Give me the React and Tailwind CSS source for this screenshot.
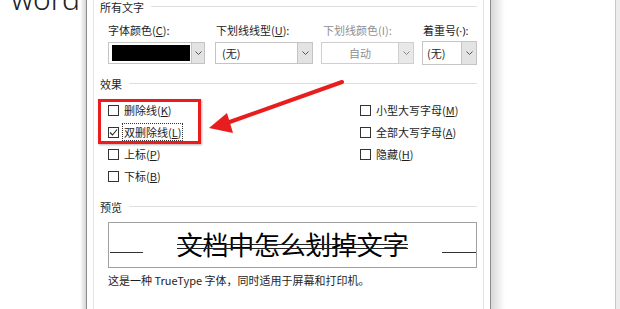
import React from "react";

const Chevron = ({ color = "#555" }) => (
    <svg width="7" height="4" viewBox="0 0 7 4" fill="none">
        <polyline points="0.5,0.5 3.5,3.5 6.5,0.5" stroke={color} strokeWidth="1" />
    </svg>
);

const GroupTitle = ({ children }) => (
    <div className="flex items-center h-[14px] leading-[14px]">
        <span className="text-[#1e1e1e] whitespace-nowrap">{children}</span>
        <div className="flex-1 h-px bg-[#dedede] ml-[7px] -mt-[2px]" />
    </div>
);

const Checkbox = ({ checked, label, keyChar, focus }) => (
    <div className="flex items-center h-[22px]">
        <div className="w-[11px] h-[11px] border border-[#333] bg-white flex items-center justify-center">
            {checked && (
                <svg width="9" height="9" viewBox="0 0 9 9" fill="none">
                    <polyline points="1,4.5 3.5,7 8,1.5" stroke="#222" strokeWidth="1.1" />
                </svg>
            )}
        </div>
        <span
            className={
                "ml-[3px] px-[1px] leading-[16px] text-[#1e1e1e] whitespace-nowrap " +
                (focus ? "border border-dotted border-[#333]" : "border border-transparent")
            }
        >
            {label}(<u>{keyChar}</u>)
        </span>
    </div>
);

export default function App() {
    return (
        <div className="relative w-[620px] h-[309px] overflow-hidden bg-white flex font-['Noto_Sans_CJK_SC',sans-serif] text-[11px]">
            {/* document behind the dialog */}
            <div className="relative w-[86px] shrink-0 overflow-hidden">
                <div className="w-[86px] overflow-hidden whitespace-nowrap pl-[11px] -mt-[16px] text-[30px] leading-[30px] text-[#222] font-['Noto_Sans','Noto_Sans_CJK_SC',sans-serif] font-light">
                    word 文
                </div>
                <div className="absolute right-0 top-0 bottom-0 w-[6px] bg-gradient-to-r from-transparent to-[#d4d4d4]" />
            </div>

            {/* dialog */}
            <div className="relative w-[405px] shrink-0 bg-white border-l border-r border-[#8c8c8c]">
                <div className="ml-[6px] mr-[6px] h-full border-l border-r border-[#e4e4e4] pl-[6px] pr-[6px]">
                    <GroupTitle>所有文字</GroupTitle>

                    <div className="ml-[8px] mt-[9px] flex">
                        <div className="w-[97px] flex flex-col">
                            <div className="h-[14px] leading-[14px] text-[#1e1e1e] whitespace-nowrap">字体颜色(<u>C</u>):</div>
                            <div className="mt-[5px] h-[22px] border border-[#c4c4c4] bg-white flex items-center pl-[3px]">
                                <div className="w-[78px] h-[16px] bg-black" />
                                <div className="ml-auto w-[13px] h-full bg-[#e3e3e3] border-l border-[#c4c4c4] flex items-center justify-center">
                                    <Chevron />
                                </div>
                            </div>
                        </div>
                        <div className="w-[98px] ml-[10px] flex flex-col">
                            <div className="h-[14px] leading-[14px] pl-[1px] text-[#1e1e1e] whitespace-nowrap">下划线线型(<u>U</u>):</div>
                            <div className="mt-[5px] h-[22px] border border-[#c4c4c4] bg-white flex items-center pl-[6px]">
                                <span className="text-[#1e1e1e]">(无)</span>
                                <div className="ml-auto w-[15px] h-full bg-[#e3e3e3] border-l border-[#c4c4c4] flex items-center justify-center">
                                    <Chevron />
                                </div>
                            </div>
                        </div>
                        <div className="w-[93px] ml-[8px] flex flex-col">
                            <div className="h-[14px] leading-[14px] pl-[2px] text-[#8f8f8f] whitespace-nowrap">下划线颜色(I):</div>
                            <div className="mt-[5px] h-[22px] border border-[#cfcfcf] bg-white flex items-center">
                                <span className="flex-1 text-center text-[#8f8f8f]">自动</span>
                                <div className="w-[15px] h-full bg-[#e8e8e8] border-l border-[#cfcfcf] flex items-center justify-center">
                                    <Chevron color="#888" />
                                </div>
                            </div>
                        </div>
                        <div className="w-[55px] ml-[8px] flex flex-col">
                            <div className="h-[14px] leading-[14px] pl-[1px] text-[#1e1e1e] whitespace-nowrap">
                                着重号<span className="font-['Noto_Sans',sans-serif]">(·):</span>
                            </div>
                            <div className="mt-[4px] h-[24px] border border-[#c4c4c4] bg-white flex items-center pl-[4px]">
                                <span className="text-[#1e1e1e]">(无)</span>
                                <div className="ml-auto w-[15px] h-full bg-[#e3e3e3] border-l border-[#c4c4c4] flex items-center justify-center">
                                    <Chevron />
                                </div>
                            </div>
                        </div>
                    </div>

                    <div className="mt-[12px]">
                        <GroupTitle>效果</GroupTitle>
                    </div>
                    <div className="ml-[8px] mt-[8px] flex">
                        <div className="w-[252px] flex flex-col">
                            <Checkbox label="删除线" keyChar="K" />
                            <Checkbox label="双删除线" keyChar="L" checked focus />
                            <Checkbox label="上标" keyChar="P" />
                            <Checkbox label="下标" keyChar="B" />
                        </div>
                        <div className="flex flex-col">
                            <Checkbox label="小型大写字母" keyChar="M" />
                            <Checkbox label="全部大写字母" keyChar="A" />
                            <Checkbox label="隐藏" keyChar="H" />
                        </div>
                    </div>

                    <div className="mt-[13px]">
                        <GroupTitle>预览</GroupTitle>
                    </div>
                    <div className="ml-[8px] mt-[8px] h-[46px] border border-[#a0a0a0] flex items-start">
                        <div className="mt-[29px] ml-[1px] w-[33px] h-px bg-[#333]" />
                        <div className="flex-1 flex justify-center">
                            <span className="relative mt-[5px] text-[26px] leading-[32px] text-black tracking-[-0.3px]">
                                文档中怎么划掉文字
                                <span className="absolute left-0 right-0 top-[16px] h-px bg-[#222]" />
                                <span className="absolute left-0 right-0 top-[20px] h-px bg-[#222]" />
                            </span>
                        </div>
                        <div className="mt-[29px] w-[34px] h-px bg-[#333]" />
                    </div>
                    <div className="ml-[8px] mt-[5px] h-[14px] leading-[14px] text-[#1e1e1e] whitespace-nowrap">
                        这是一种 TrueType 字体，同时适用于屏幕和打印机。
                    </div>
                </div>
            </div>

            <div className="w-[14px] shrink-0 bg-gradient-to-r from-[#d8d8d8] to-white" />
            <div className="flex-1 bg-white" />
            <div className="w-px shrink-0 bg-[#c9c9c9]" />
            <div className="w-[4px] shrink-0 bg-[#ececec]" />

            {/* red annotation */}
            <div className="absolute left-[98px] top-[99px] w-[103px] h-[45px] border-[3px] border-[#ec1c1c] shadow-[1px_1px_2px_rgba(0,0,0,0.3)] pointer-events-none" />
            <svg className="absolute left-0 top-0 pointer-events-none" width="620" height="309" viewBox="0 0 620 309">
                <line x1="342" y1="82" x2="224" y2="124" stroke="#e81e1e" strokeWidth="4" strokeLinecap="round" />
                <polygon points="209,128 227,113 233,133" fill="#e81e1e" />
            </svg>
        </div>
    );
}
